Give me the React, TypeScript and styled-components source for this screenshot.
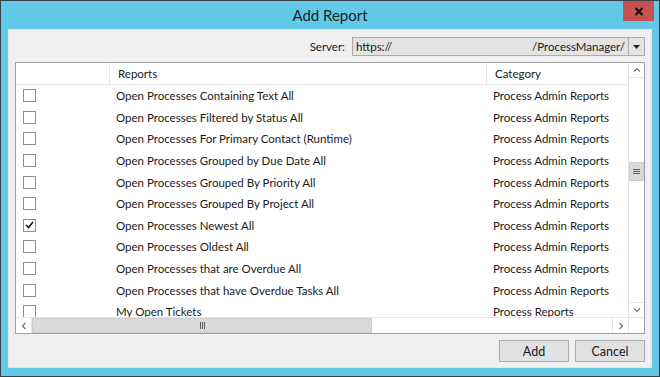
import React from "react";
import styled, { createGlobalStyle } from "styled-components";

const GlobalStyle = createGlobalStyle`
  html, body {
    margin: 0;
    padding: 0;
    background: #ffffff;
  }
  * {
    box-sizing: border-box;
  }
`;

const Window = styled.div`
  width: 660px;
  height: 377px;
  border: 1px solid #3a4047;
  background: #62c8e8;
  display: flex;
  flex-direction: column;
  font-family: "Segoe UI", Lato, "Noto Sans", sans-serif;
  font-size: 11.5px;
  color: #1a1a1a;
  overflow: hidden;
`;

const TitleBar = styled.div`
  height: 28px;
  display: grid;
  grid-template-columns: 1fr auto 1fr;
  align-items: center;
`;

const Title = styled.div`
  grid-column: 2;
  font-size: 15px;
  color: #1e1e1e;
`;

const CloseButton = styled.div`
  grid-column: 3;
  justify-self: end;
  align-self: start;
  width: 31px;
  height: 20px;
  margin-right: 5px;
  background: #c75050;
  display: flex;
  align-items: center;
  justify-content: center;
`;

const Body = styled.div`
  flex: 1;
  margin: 0 7px 8px 7px;
  background: #f0f0f0;
  border: 1px solid #e4e4e4;
  padding: 7px 6px 5px 6px;
  display: flex;
  flex-direction: column;
`;

const ServerRow = styled.div`
  display: flex;
  justify-content: flex-end;
  align-items: center;
  gap: 7px;
  height: 19px;
`;

const Combo = styled.div`
  width: 293px;
  height: 19px;
  border: 1px solid #acacac;
  background: #e3e3e3;
  display: flex;
`;

const ComboText = styled.div`
  flex: 1;
  display: flex;
  justify-content: space-between;
  align-items: center;
  padding: 0 3px 0 3px;
`;

const ComboArrow = styled.div`
  width: 16px;
  border-left: 1px solid #acacac;
  display: flex;
  align-items: center;
  justify-content: center;
`;

const Grid = styled.div`
  margin-top: 6px;
  height: 272px;
  border: 1px solid #a0a0a0;
  background: #ffffff;
  display: grid;
  grid-template-columns: 1fr 16px;
  grid-template-rows: 1fr 16px;
`;

const Table = styled.div`
  overflow: hidden;
  display: flex;
  flex-direction: column;
`;

const HeaderRow = styled.div`
  height: 22px;
  flex: none;
  display: grid;
  grid-template-columns: 94px 377px 1fr;
  border-bottom: 1px solid #e5e5e5;
`;

const HeaderCell = styled.div<{ $divider?: boolean }>`
  display: flex;
  align-items: center;
  padding-left: 8px;
  border-right: ${(p) => (p.$divider ? "1px solid #e5e5e5" : "none")};
  white-space: nowrap;
`;

const Row = styled.div`
  height: 21.6px;
  flex: none;
  display: grid;
  grid-template-columns: 94px 377px 1fr;
  align-items: center;
`;

const CheckCell = styled.div`
  padding-left: 7px;
  display: flex;
  align-items: center;
`;

const Box = styled.div`
  width: 13px;
  height: 13px;
  border: 1px solid #8e8e8e;
  background: #ffffff;
  display: flex;
  align-items: center;
  justify-content: center;
`;

const TextCell = styled.div`
  padding-left: 6px;
  white-space: nowrap;
  overflow: hidden;
`;

const VBar = styled.div`
  border-left: 1px solid #e6e6e6;
  display: flex;
  flex-direction: column;
`;

const HBar = styled.div`
  border-top: 1px solid #e6e6e6;
  display: flex;
`;

const Corner = styled.div`
  border-top: 1px solid #e6e6e6;
  border-left: 1px solid #e6e6e6;
  background: #ffffff;
`;

const ArrowBox = styled.div<{ $side: "top" | "bottom" | "left" | "right" }>`
  flex: none;
  width: ${(p) => (p.$side === "left" || p.$side === "right" ? "16px" : "auto")};
  height: ${(p) => (p.$side === "top" || p.$side === "bottom" ? "15px" : "auto")};
  display: flex;
  align-items: center;
  justify-content: center;
  border-${(p) =>
    ({ top: "bottom", bottom: "top", left: "right", right: "left" }[p.$side])}: 1px solid #e6e6e6;
`;

const Track = styled.div<{ $vertical?: boolean }>`
  flex: 1;
  display: flex;
  flex-direction: ${(p) => (p.$vertical ? "column" : "row")};
`;

const Thumb = styled.div<{ $vertical?: boolean }>`
  flex: none;
  background: #dadada;
  border: 1px solid #cdcdcd;
  display: flex;
  flex-direction: ${(p) => (p.$vertical ? "column" : "row")};
  align-items: center;
  justify-content: center;
  gap: 1px;
`;

const Grip = styled.span<{ $vertical?: boolean }>`
  display: block;
  background: #606060;
  width: ${(p) => (p.$vertical ? "7px" : "1px")};
  height: ${(p) => (p.$vertical ? "1px" : "7px")};
`;

const Footer = styled.div`
  margin-top: 6px;
  display: flex;
  justify-content: flex-end;
  gap: 6px;
`;

const Button = styled.div`
  width: 70px;
  height: 22px;
  border: 1px solid #adadad;
  background: #e1e1e1;
  display: flex;
  align-items: center;
  justify-content: center;
  font-size: 12.5px;
`;

const reports = [
  { name: "Open Processes Containing Text All", category: "Process Admin Reports" },
  { name: "Open Processes Filtered by Status All", category: "Process Admin Reports" },
  { name: "Open Processes For Primary Contact (Runtime)", category: "Process Admin Reports" },
  { name: "Open Processes Grouped by Due Date All", category: "Process Admin Reports" },
  { name: "Open Processes Grouped By Priority All", category: "Process Admin Reports" },
  { name: "Open Processes Grouped By Project All", category: "Process Admin Reports" },
  { name: "Open Processes Newest All", category: "Process Admin Reports", checked: true },
  { name: "Open Processes Oldest All", category: "Process Admin Reports" },
  { name: "Open Processes that are Overdue All", category: "Process Admin Reports" },
  { name: "Open Processes that have Overdue Tasks All", category: "Process Admin Reports" },
  { name: "My Open Tickets", category: "Process Reports" },
];

function Chevron({ dir }: { dir: "up" | "down" | "left" | "right" }) {
  const rot = { up: 0, right: 90, down: 180, left: 270 }[dir];
  return (
    <svg width="8" height="8" viewBox="0 0 8 8" style={{ transform: `rotate(${rot}deg)` }}>
      <path d="M1 5.5 L4 2.5 L7 5.5" fill="none" stroke="#707070" strokeWidth="1.2" />
    </svg>
  );
}

function App() {
  return (
    <>
      <GlobalStyle />
      <Window>
        <TitleBar>
          <Title>Add Report</Title>
          <CloseButton>
            <svg width="10" height="9" viewBox="0 0 10 9">
              <path d="M1.5 1 L8.5 8 M8.5 1 L1.5 8" stroke="#111" strokeWidth="2.2" />
            </svg>
          </CloseButton>
        </TitleBar>
        <Body>
          <ServerRow>
            <span>Server:</span>
            <Combo>
              <ComboText>
                <span>https://</span>
                <span>/ProcessManager/</span>
              </ComboText>
              <ComboArrow>
                <svg width="7" height="4" viewBox="0 0 7 4">
                  <path d="M0 0 L7 0 L3.5 4 Z" fill="#222" />
                </svg>
              </ComboArrow>
            </Combo>
          </ServerRow>
          <Grid>
            <Table>
              <HeaderRow>
                <HeaderCell $divider />
                <HeaderCell $divider>Reports</HeaderCell>
                <HeaderCell>Category</HeaderCell>
              </HeaderRow>
              {reports.map((r) => (
                <Row key={r.name}>
                  <CheckCell>
                    <Box>
                      {r.checked && (
                        <svg width="9" height="8" viewBox="0 0 9 8">
                          <path d="M1 4 L3.5 6.5 L8 1" fill="none" stroke="#111" strokeWidth="1.6" />
                        </svg>
                      )}
                    </Box>
                  </CheckCell>
                  <TextCell>{r.name}</TextCell>
                  <TextCell>{r.category}</TextCell>
                </Row>
              ))}
            </Table>
            <VBar>
              <ArrowBox $side="top">
                <Chevron dir="up" />
              </ArrowBox>
              <Track $vertical>
                <Thumb $vertical style={{ marginTop: 84, height: 19 }}>
                  <Grip $vertical />
                  <Grip $vertical />
                  <Grip $vertical />
                </Thumb>
              </Track>
              <ArrowBox $side="bottom">
                <Chevron dir="down" />
              </ArrowBox>
            </VBar>
            <HBar>
              <ArrowBox $side="left">
                <Chevron dir="left" />
              </ArrowBox>
              <Track>
                <Thumb style={{ width: 340 }}>
                  <Grip />
                  <Grip />
                  <Grip />
                </Thumb>
              </Track>
              <ArrowBox $side="right">
                <Chevron dir="right" />
              </ArrowBox>
            </HBar>
            <Corner />
          </Grid>
          <Footer>
            <Button>Add</Button>
            <Button>Cancel</Button>
          </Footer>
        </Body>
      </Window>
    </>
  );
}

export default App;
